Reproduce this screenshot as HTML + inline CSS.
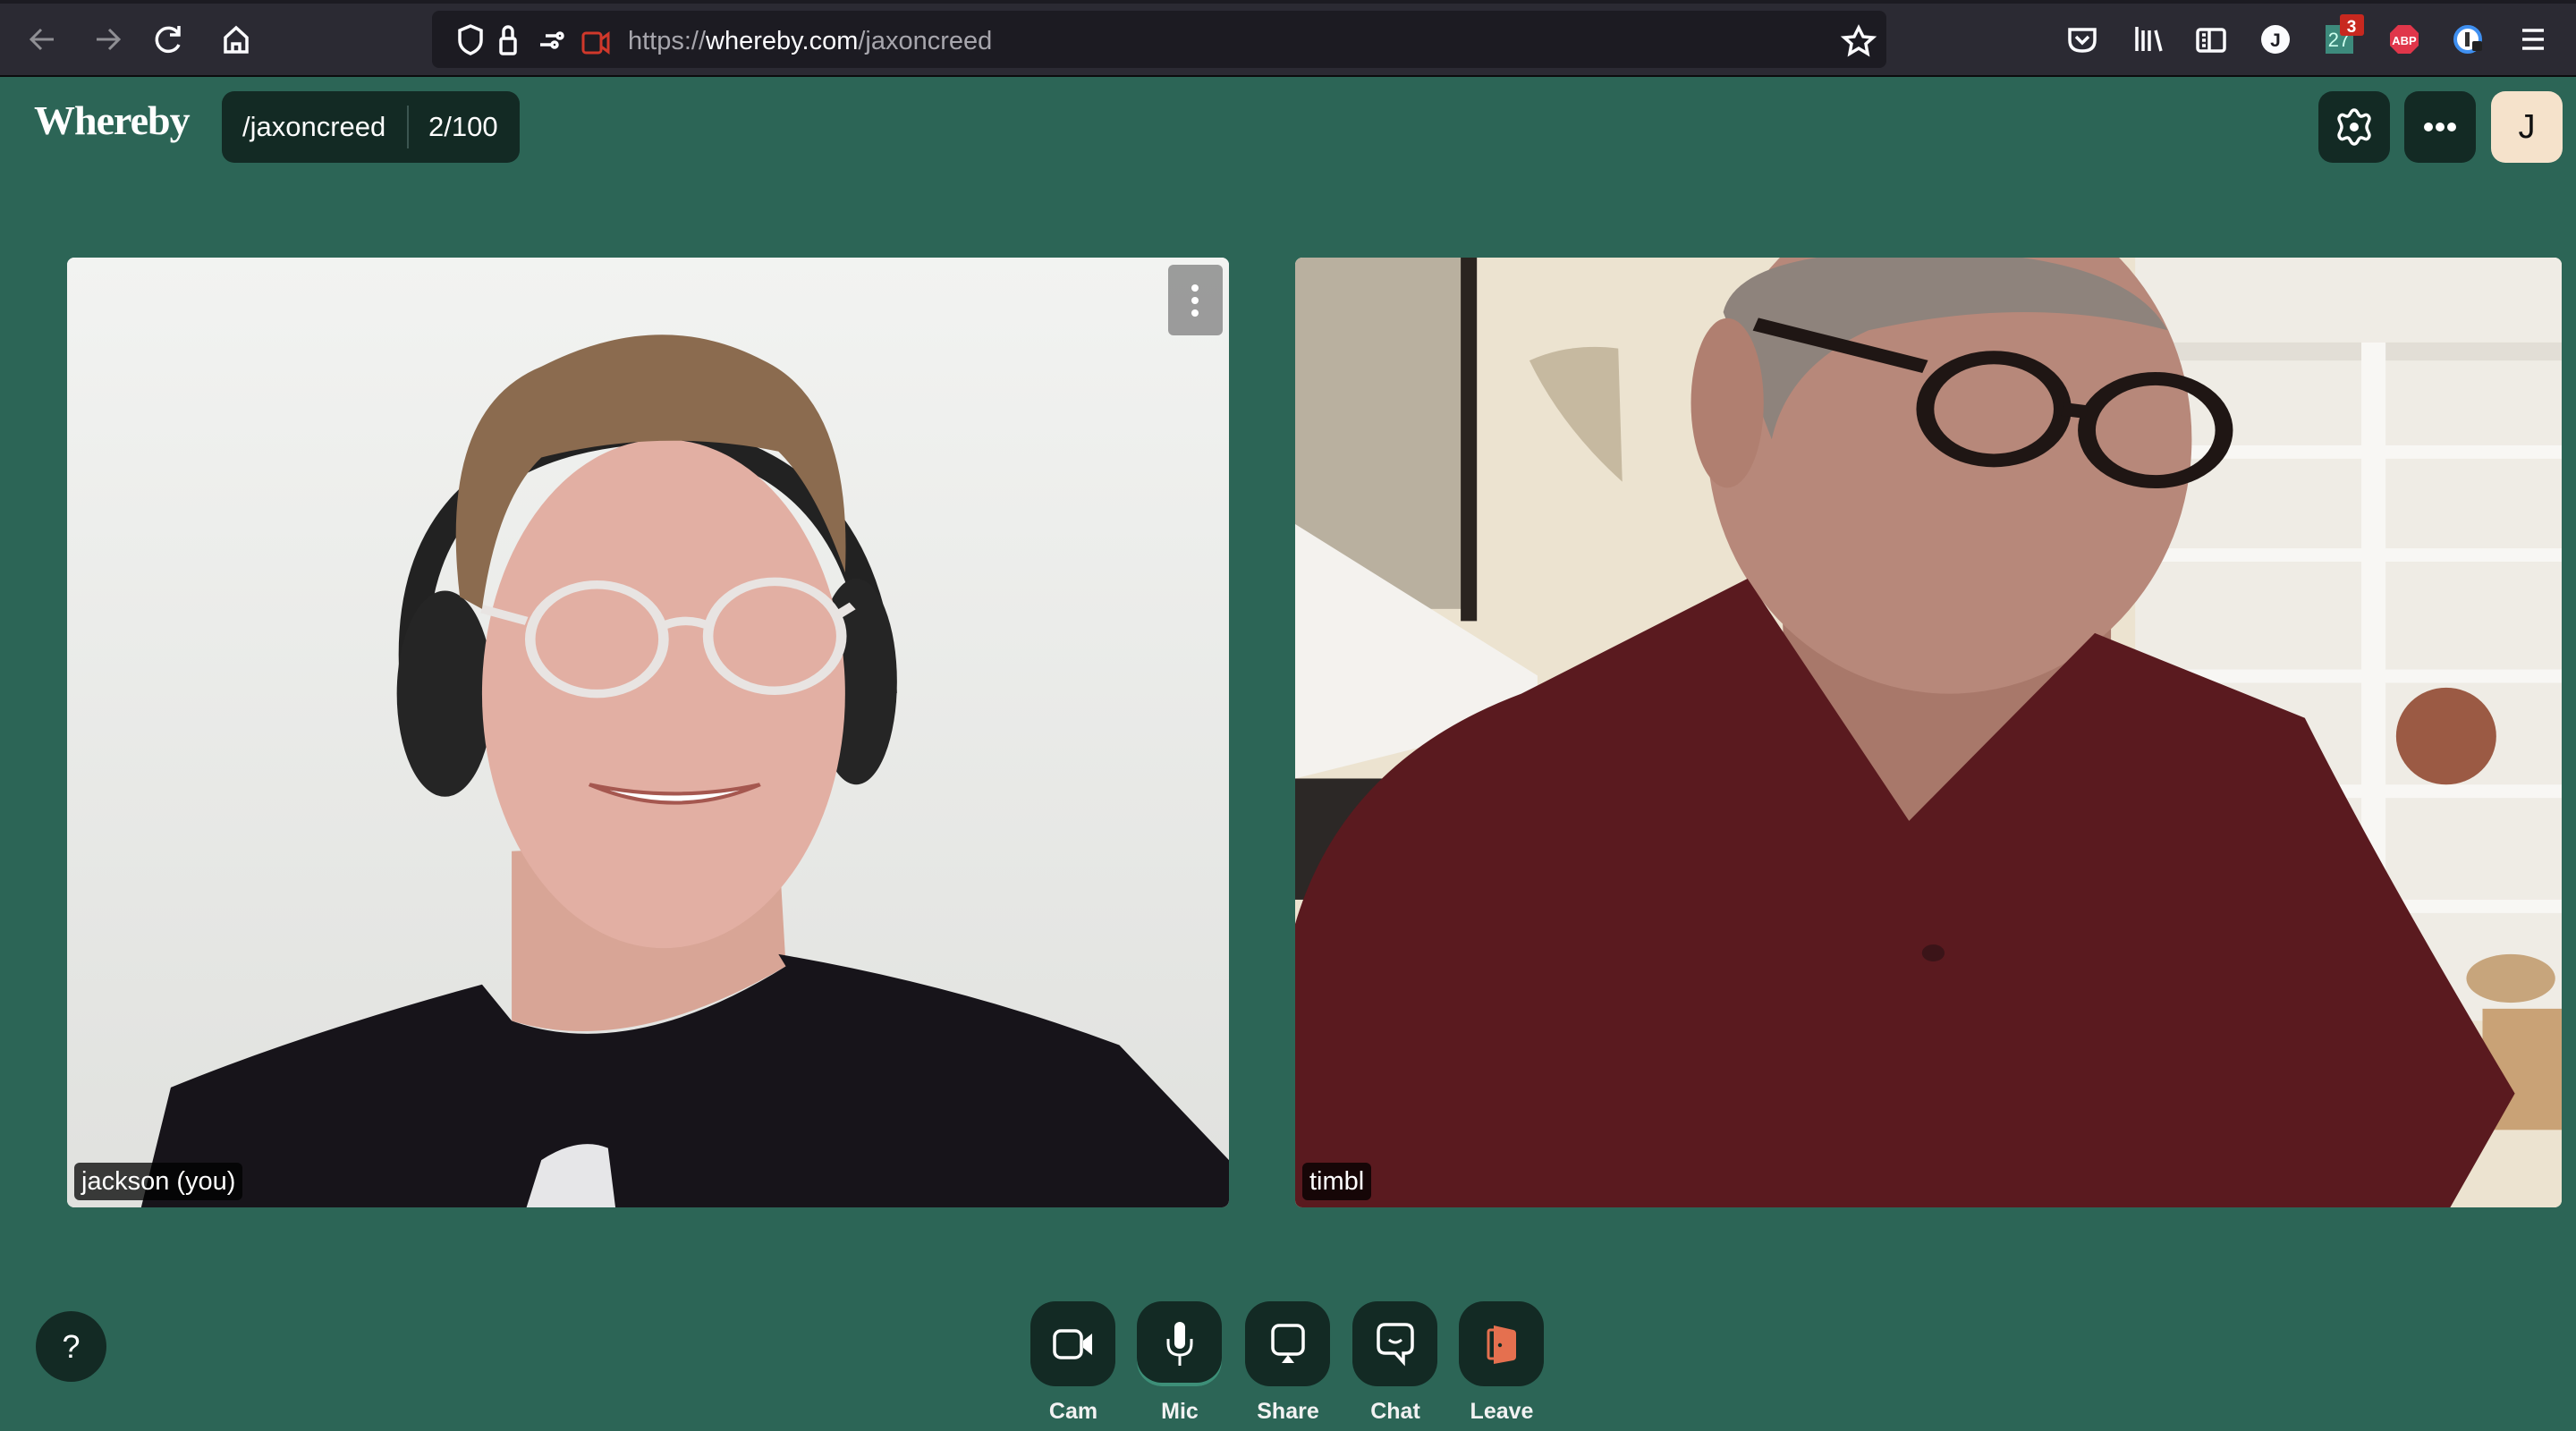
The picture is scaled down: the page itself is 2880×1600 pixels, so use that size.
<!DOCTYPE html>
<html><head><meta charset="utf-8"><style>
*{margin:0;padding:0;box-sizing:border-box}
body{width:2880px;height:1600px;background:#2c6556;position:relative;overflow:hidden;font-family:"Liberation Sans",sans-serif;color:#fff}
.tb{position:absolute;left:0;top:0;width:2880px;height:86px;background:#2b2a33;border-top:4px solid #1c1b22;border-bottom:2px solid #0c0c0e}
.url{position:absolute;left:483px;top:8px;width:1626px;height:64px;background:#1c1b22;border-radius:8px}
.abs{position:absolute}
.btn{position:absolute;background:#132a24;border-radius:16px}
.vid{position:absolute;top:288px;height:1062px;border-radius:8px;overflow:hidden}
.vid svg{position:absolute;left:0;top:0;width:100%;height:100%}
.lbl{position:absolute;left:8px;bottom:8px;background:rgba(0,0,0,.75);border-radius:6px;font-size:29px;padding:6px 8px;line-height:30px}
.cb{position:absolute;top:1455px;width:95px;height:95px;background:#132a24;border-radius:28px;display:flex;align-items:center;justify-content:center}
.cl{position:absolute;top:1564px;width:120px;text-align:center;font-size:25px;font-weight:bold;color:#f2f2f2}
</style></head><body>
<div class="tb"><div class="url"></div></div>
<svg class="abs" style="left:0;top:0" width="2880" height="86">
<g stroke="#8f8f94" stroke-width="3" fill="none"><path d="M60 44H36M46 33L35 44L46 55"/><path d="M108 44H132M122 33L133 44L122 55"/></g>
<g stroke="#fbfbfe" stroke-width="3.5" fill="none"><path d="M199 37A13 13 0 1 0 200 50M200 29V39H190"/><path d="M252 42L264 31L276 42V58H252ZM260 58V49H268V58"/>
<path d="M514 34L526 29L538 34V45Q538 55 526 60Q514 55 514 45Z"/><rect x="560" y="43" width="16" height="17" rx="2"/><path d="M563 43V35A5 5 0 0 1 573 35V43"/>
<path d="M610 40H622M604 50H616"/><circle cx="626" cy="40" r="3"/><circle cx="620" cy="50" r="3"/>
<path d="M2078 31L2083 41L2094 42L2086 49L2088 60L2078 54L2068 60L2070 49L2062 42L2073 41Z"/>
<path d="M2314 33H2342V45Q2342 57 2328 57Q2314 57 2314 45Z"/><path d="M2321 41L2328 48L2335 41"/>
<path d="M2389 30V57M2396 34V57M2403 34V57M2410 34L2416 57"/><rect x="2457" y="33" width="30" height="24" rx="3"/><path d="M2470 33V57M2462 39H2466M2462 45H2466M2462 51H2466"/>
<path d="M2820 34H2844M2820 44H2844M2820 54H2844"/></g>
<rect x="652" y="37" width="20" height="22" rx="3" fill="none" stroke="#d0382b" stroke-width="3"/><path d="M672 44L680 38V58L672 52" fill="none" stroke="#d0382b" stroke-width="3"/>
<text x="702" y="55" font-family="Liberation Sans" font-size="29" fill="#a7a6ad">https://<tspan fill="#fbfbfe">whereby.com</tspan>/jaxoncreed</text>
<circle cx="2544" cy="44" r="16" fill="#fbfbfe"/><text x="2544" y="52" font-size="21" font-weight="bold" fill="#1c1b22" text-anchor="middle">J</text>
<rect x="2600" y="28" width="31" height="32" fill="#3d8a7c"/><text x="2615" y="52" font-size="22" fill="#cfe" text-anchor="middle">27</text>
<rect x="2616" y="16" width="27" height="24" rx="3" fill="#c8281f"/><text x="2629" y="36" font-size="19" font-weight="bold" fill="#fff" text-anchor="middle">3</text>
<path d="M2681 28H2695L2704 37V51L2695 60H2681L2672 51V37Z" fill="#e0364a"/><text x="2688" y="50" font-size="13" font-weight="bold" fill="#fff" text-anchor="middle">ABP</text>
<circle cx="2759" cy="44" r="14" fill="#fff" stroke="#3f8ff0" stroke-width="4"/><rect x="2756" y="36" width="5" height="16" fill="#333"/><rect x="2764" y="46" width="11" height="11" rx="2" fill="#222"/>
</svg>

<div class="abs" style="left:38px;top:108px;font-family:'Liberation Serif',serif;font-size:46px;font-weight:bold;letter-spacing:-1px">Whereby</div>
<div class="btn" style="left:248px;top:102px;width:333px;height:80px;border-radius:14px"></div>
<div class="abs" style="left:271px;top:124px;font-size:31px">/jaxoncreed</div>
<div class="abs" style="left:455px;top:118px;width:2px;height:48px;background:#3b5550"></div>
<div class="abs" style="left:479px;top:124px;font-size:31px">2/100</div>

<div class="btn" style="left:2592px;top:102px;width:80px;height:80px"></div>
<svg class="abs" style="left:2610px;top:120px" width="44" height="44" viewBox="0 0 44 44"><path d="M22 3C26 3 26 9 29 10C32 11 35 6 38 10C41 14 36 17 36 22C36 27 41 30 38 34C35 38 32 33 29 34C26 35 26 41 22 41C18 41 18 35 15 34C12 33 9 38 6 34C3 30 8 27 8 22C8 17 3 14 6 10C9 6 12 11 15 10C18 9 18 3 22 3Z" fill="none" stroke="#fff" stroke-width="3.5"/><circle cx="22" cy="22" r="5" fill="#fff"/></svg>
<div class="btn" style="left:2688px;top:102px;width:80px;height:80px"></div>
<svg class="abs" style="left:2707px;top:132px" width="42" height="20"><circle cx="8" cy="10" r="5" fill="#fff"/><circle cx="21" cy="10" r="5" fill="#fff"/><circle cx="34" cy="10" r="5" fill="#fff"/></svg>
<div class="abs" style="left:2785px;top:102px;width:80px;height:80px;border-radius:16px;background:#f5e2cb;color:#111;font-size:38px;text-align:center;line-height:80px">J</div>

<div class="vid" style="left:75px;width:1299px;background:#eceeeb">
<svg viewBox="0 0 1568 1568" preserveAspectRatio="none">
<defs><linearGradient id="g1" x1="0" y1="0" x2="0" y2="1"><stop offset="0" stop-color="#f2f3f1"/><stop offset="1" stop-color="#e0e1de"/></linearGradient></defs>
<rect width="1568" height="1568" fill="url(#g1)"/>
<path d="M470 720Q440 330 760 290Q1080 300 1100 720" fill="none" stroke="#222" stroke-width="40"/>
<ellipse cx="510" cy="720" rx="65" ry="170" fill="#252525"/><ellipse cx="1065" cy="700" rx="55" ry="170" fill="#252525"/>
<path d="M600 980L600 1260Q760 1320 970 1170L960 960Z" fill="#d8a596"/>
<ellipse cx="805" cy="720" rx="245" ry="420" fill="#e2afa3"/>
<path d="M530 560Q500 250 640 180Q800 80 940 170Q1060 240 1050 520Q1010 380 960 320Q800 280 640 330Q580 400 560 580Z" fill="#8b6b4f"/>
<g fill="none" stroke="#e8e4e2" stroke-width="14"><circle cx="715" cy="630" r="90"/><circle cx="955" cy="625" r="90"/><path d="M800 610Q835 590 870 610M620 600L560 580M1040 590L1060 575"/></g>
<path d="M705 870Q820 930 935 870Q820 900 705 870Z" fill="#fff" stroke="#a5574f" stroke-width="6"/>
<path d="M100 1568L140 1370Q320 1280 560 1200L600 1260Q760 1330 970 1170L960 1150Q1200 1200 1420 1300L1568 1490V1568Z" fill="#17141a"/>
<path d="M640 1490Q690 1450 730 1470L740 1568H620Z" fill="#e6e6e8"/>
</svg>
<div class="abs" style="left:1231px;top:8px;width:61px;height:79px;background:rgba(140,140,140,.85);border-radius:6px"></div>
<svg class="abs" style="left:1255px;top:28px" width="12" height="40"><circle cx="6" cy="6" r="4" fill="#fff"/><circle cx="6" cy="20" r="4" fill="#fff"/><circle cx="6" cy="34" r="4" fill="#fff"/></svg>
<div class="lbl">jackson (you)</div>
</div>

<div class="vid" style="left:1448px;width:1416px;background:#e6dcc8">
<svg viewBox="0 0 1568 1568" preserveAspectRatio="none">
<rect width="1568" height="1568" fill="#ece3d0"/>
<rect x="0" y="0" width="210" height="580" fill="#b9b09f"/><rect x="205" y="0" width="20" height="600" fill="#2a2420"/>
<path d="M0 440L300 690L300 760L0 860Z" fill="#f4f2ee"/><rect x="0" y="860" width="120" height="200" fill="#2c2826"/>
<path d="M290 170Q340 140 400 150L405 370Q330 280 290 170Z" fill="#c6b9a0"/>
<rect x="1040" y="0" width="528" height="1260" fill="#efece5"/><rect x="1060" y="140" width="508" height="30" fill="#e2ded6"/>
<g fill="#f8f7f4"><rect x="1040" y="310" width="528" height="22"/><rect x="1040" y="480" width="528" height="22"/><rect x="1040" y="680" width="528" height="22"/><rect x="1040" y="870" width="528" height="22"/><rect x="1040" y="1060" width="528" height="22"/><rect x="1320" y="140" width="30" height="1120"/></g>
<ellipse cx="1425" cy="790" rx="62" ry="80" fill="#9b5a44"/>
<ellipse cx="1505" cy="1190" rx="55" ry="40" fill="#c7a57c"/><rect x="1470" y="1240" width="98" height="200" fill="#c9a276"/>
<path d="M600 480L1010 520L1010 800L770 950L610 820Z" fill="#a8786a"/>
<ellipse cx="810" cy="300" rx="300" ry="420" fill="#b7887a"/>
<path d="M530 90Q550 -20 810 -10Q1030 0 1080 120Q910 60 710 120Q610 180 590 300Z" fill="#8e837c"/>
<ellipse cx="535" cy="240" rx="45" ry="140" fill="#b07f70"/>
<g fill="none" stroke="#1f1614" stroke-width="22"><circle cx="865" cy="250" r="85"/><circle cx="1065" cy="285" r="85"/><path d="M570 110L780 180M950 250L980 255"/></g>
<path d="M0 1100Q60 830 280 720L560 530L760 930L990 620L1250 760Q1340 1000 1510 1380L1430 1568H0Z" fill="#5a1a1f"/>
<circle cx="790" cy="1148" r="14" fill="#3b1418"/>
</svg>
<div class="lbl">timbl</div>
</div>

<div class="abs" style="left:40px;top:1466px;width:79px;height:79px;border-radius:50%;background:#132a24;text-align:center;line-height:79px;font-size:36px">?</div>

<div class="cb" style="left:1152px"><svg width="46" height="36" viewBox="0 0 46 36"><rect x="2" y="3" width="30" height="30" rx="7" fill="none" stroke="#fff" stroke-width="3.5"/><path d="M34 14L44 6V30L34 22Z" fill="#fff"/></svg></div>
<div class="cb" style="left:1271px;box-shadow:inset 0 -4px 0 #3d8f78"><svg width="32" height="52" viewBox="0 0 32 52"><rect x="10" y="1" width="12" height="30" rx="6" fill="#fff"/><path d="M3 20V25Q3 38 16 38Q29 38 29 25V20M16 38V50" fill="none" stroke="#fff" stroke-width="3"/></svg></div>
<div class="cb" style="left:1392px"><svg width="40" height="48" viewBox="0 0 40 48"><rect x="3" y="3" width="34" height="32" rx="7" fill="none" stroke="#fff" stroke-width="3.5"/><path d="M20 36L27 45H13Z" fill="#fff"/></svg></div>
<div class="cb" style="left:1512px"><svg width="44" height="50" viewBox="0 0 44 50"><path d="M11 3H33Q41 3 41 11V27Q41 35 33 35H31V45L22 35H11Q3 35 3 27V11Q3 3 11 3Z" fill="none" stroke="#fff" stroke-width="3.5"/><path d="M15 20Q22 26 29 20" fill="none" stroke="#fff" stroke-width="3"/></svg></div>
<div class="cb" style="left:1631px"><svg width="36" height="50" viewBox="0 0 36 50"><rect x="3" y="9" width="11" height="32" rx="2" fill="none" stroke="#e5704f" stroke-width="3"/><path d="M9 4L31 9Q34 10 34 13V39Q34 42 31 43L9 47Z" fill="#e5704f"/><circle cx="16" cy="26" r="2.2" fill="#132a24"/></svg></div>
<div class="cl" style="left:1140px">Cam</div>
<div class="cl" style="left:1259px">Mic</div>
<div class="cl" style="left:1380px">Share</div>
<div class="cl" style="left:1500px">Chat</div>
<div class="cl" style="left:1619px">Leave</div>
</body></html>
